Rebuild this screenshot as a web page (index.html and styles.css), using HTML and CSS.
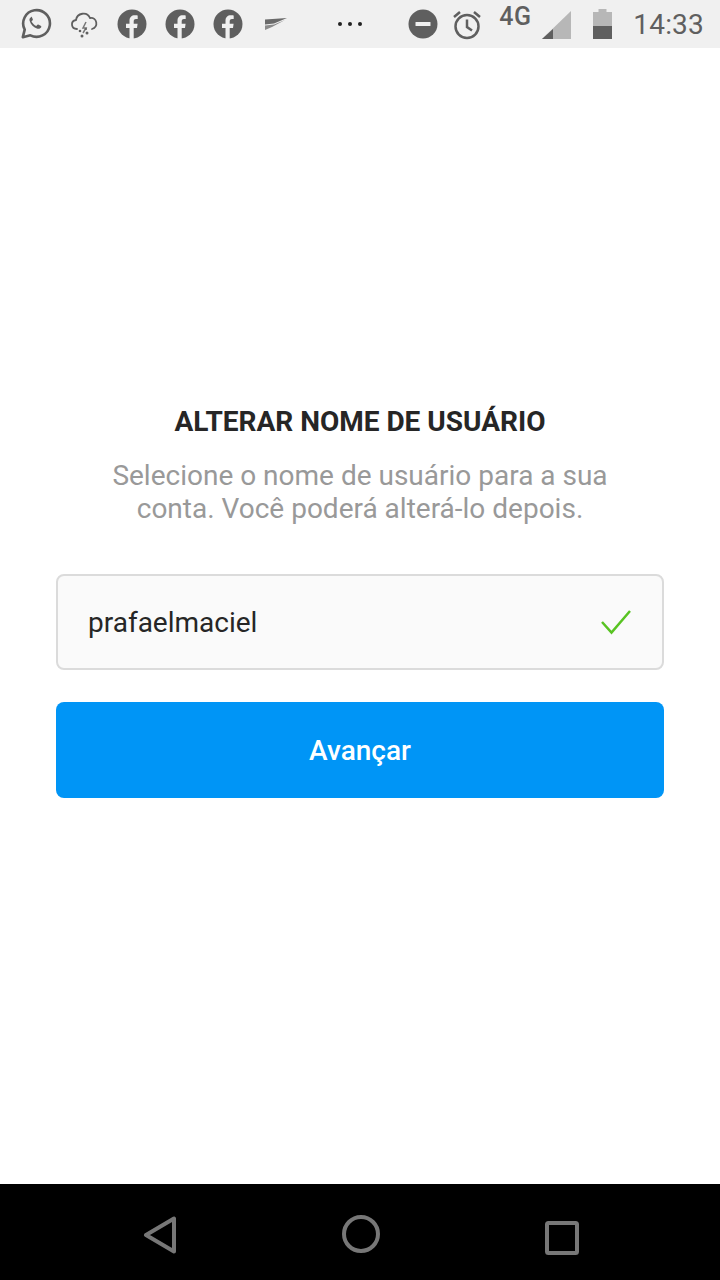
FILE: index.html
```html
<!DOCTYPE html>
<html lang="pt">
<head>
<meta charset="utf-8">
<title>Alterar nome de usuário</title>
<link rel="stylesheet" href="styles.css">
</head>
<body>
<div class="phone">
  <header class="status">
    <div class="status-left">
      <svg class="ic wa" viewBox="0 0 34 34"><path class="wa-o" d="M3 31l2-8A14.2 14.2 0 1 1 11 29z"/><path class="wa-p" d="M12 9.500c-1.500.8-2.300 2.200-1.800 4 1.200 4 4.200 7 8.300 8.500 1.800.5 3.400-.3 4.200-1.800l-.3-1.200-3-1.500-1 .3-1.100 1.400c-2.300-1-4-2.700-5.100-5l1.300-1.100.2-1-1.300-3z"/></svg>
      <svg class="ic cloud" viewBox="0 0 30 30"><path class="cl-o" d="M8 20c-6 0-7-8-1-9 1-7 11-9 14-2 7-1 9 9 2 11"/><path class="cl-r" d="M17 13l-3 6h3l-3 5"/><circle cx="11" cy="22" r="1.300"/><circle cx="13" cy="27" r="1.500"/><circle cx="18" cy="24" r="1.500"/><circle cx="17" cy="20" r="1"/></svg>
      <svg class="ic fb" viewBox="0 0 30 30"><use href="#fb"/></svg>
      <svg class="ic fb" viewBox="0 0 30 30"><use href="#fb"/></svg>
      <svg class="ic fb" viewBox="0 0 30 30"><use href="#fb"/></svg>
      <svg class="ic plane" viewBox="0 0 24 14"><path class="pl-a" d="M1 2.500 23 1 10 6.500 1 7.500z"/><path class="pl-b" d="M1 8.500 10 7.500 21 3 8 10 1 13z"/></svg>
      <svg class="ic dots" viewBox="0 0 26 6"><circle cx="3" cy="3" r="2"/><circle cx="13" cy="3" r="2"/><circle cx="23" cy="3" r="2"/></svg>
    </div>
    <div class="status-right">
      <svg class="ic dnd" viewBox="0 0 30 30"><circle cx="15" cy="15" r="14.500"/><rect x="7.500" y="13" width="15" height="4" rx=".5"/></svg>
      <svg class="ic alarm" viewBox="0 0 30 30"><circle class="al" cx="15" cy="16.500" r="11.500"/><path class="al" d="M15 9.500V17l5 3.500"/><path class="al" d="M2 7l6-5M28 7l-6-5"/></svg>
      <span class="net">4G</span>
      <svg class="ic signal" viewBox="0 0 29 28"><path class="sg-l" d="M29 0v28H0z"/><path class="sg-d" d="M11 18v10H0z"/></svg>
      <svg class="ic batt" viewBox="0 0 19 30"><path class="bt-l" d="M5.500 0h8v3H19v14H0V3h5.500z"/><rect class="bt-d" y="17" width="19" height="13"/></svg>
      <span class="time">14:33</span>
    </div>
  </header>

  <main class="content">
    <h1 class="title">ALTERAR NOME DE USUÁRIO</h1>
    <p class="subtitle">Selecione o nome de usuário para a sua conta. Você poderá alterá-lo depois.</p>
    <div class="field">
      <span class="field-value">prafaelmaciel</span>
      <svg class="check" viewBox="0 0 32 26"><path d="M2 13l9.500 10.500L30 2"/></svg>
    </div>
    <button class="next" type="button">Avançar</button>
  </main>

  <nav class="navbar">
    <svg class="nav-ic back" viewBox="0 0 34 38"><path d="M31 2.500v33L3 19z"/></svg>
    <svg class="nav-ic home" viewBox="0 0 38 38"><circle cx="19" cy="19" r="17"/></svg>
    <svg class="nav-ic recent" viewBox="0 0 34 34"><rect x="2" y="2" width="30" height="30" rx="1.500"/></svg>
  </nav>
</div>
<svg class="defs" width="0" height="0"><defs><g id="fb"><circle cx="15" cy="15" r="14.500" fill="#5f5f5f"/><path fill="#f0f0f0" d="M12.500 30V19H9v-4.200h3.500v-3c0-3.600 2.200-5.500 5.300-5.500 1.500 0 2.900.2 2.900.2v3.600h-1.700c-1.800 0-2.300 1.100-2.300 2.300v2.400h3.900l-.6 4.200h-3.300v11z"/></g></defs></svg>
</body>
</html>
```
FILE: styles.css
```css
* { box-sizing: border-box; }
html, body { margin: 0; padding: 0; background: #fff; }
body { font-family: Roboto, "Liberation Sans", sans-serif; }
.phone { width: 720px; height: 1280px; display: flex; flex-direction: column; overflow: hidden; }
.defs { position: absolute; }

.status { height: 48px; flex: none; background: #f0f0f0; display: flex; justify-content: space-between; align-items: center; padding: 0 16px 0 20px; }
.status-left, .status-right { display: flex; align-items: center; }
.ic { display: block; flex: none; fill: #5f5f5f; }
.wa { width: 32px; height: 32px; margin-right: 17px; }
.wa-o { fill: none; stroke: #5f5f5f; stroke-width: 2.800; stroke-linejoin: round; }
.wa-p { fill: #5f5f5f; }
.cloud { width: 30px; height: 30px; margin-right: 18px; }
.cl-o { fill: none; stroke: #5f5f5f; stroke-width: 1.800; stroke-linecap: round; }
.cl-r { fill: none; stroke: #777; stroke-width: 1.500; }
.fb { width: 30px; height: 30px; margin-right: 18px; }
.plane { width: 24px; height: 14px; margin-left: 3px; margin-right: 49px; }
.pl-a { fill: #6a6a6a; }
.pl-b { fill: #8b8b8b; }
.dots { width: 26px; height: 6px; fill: #222; }
.dnd { width: 30px; height: 30px; margin-right: 14px; }
.dnd rect { fill: #f0f0f0; }
.alarm { width: 30px; height: 30px; margin-right: 17px; margin-top: 1px; }
.al { fill: none; stroke: #5f5f5f; stroke-width: 2.500; }
.net { font-size: 25px; font-weight: 500; color: #5f5f5f; line-height: 1; margin-right: 10px; margin-top: -15px; width: 33px; letter-spacing: .6px; }
.signal { width: 29px; height: 28px; margin-top: 2px; margin-right: 22px; }
.sg-l { fill: #b7b7b7; }
.sg-d { fill: #5f5f5f; }
.batt { width: 19px; height: 30px; margin-right: 21px; }
.bt-l { fill: #b7b7b7; }
.bt-d { fill: #5f5f5f; }
.time { font-size: 28px; color: #5f5f5f; line-height: 1; margin-top: 2px; letter-spacing: .2px; }

.content { flex: 1; padding: 356px 56px 0; display: flex; flex-direction: column; align-items: stretch; }
.title { margin: 0; font-size: 28px; line-height: 36px; font-weight: 700; color: #262626; text-align: center; }
.subtitle { margin: 19px 48px 0; font-size: 28px; line-height: 33px; font-weight: 400; color: #999; text-align: center; }
.field { margin-top: 49px; height: 96px; border: 2px solid #dbdbdb; border-radius: 8px; background: #fafafa; display: flex; align-items: center; justify-content: space-between; padding: 0 30px; }
.field-value { font-size: 28px; color: #262626; }
.check { width: 32px; height: 26px; fill: none; stroke: #58c322; stroke-width: 2.500; }
.next { margin-top: 32px; height: 96px; border: 0; border-radius: 8px; background: #0095f6; color: #fff; font: 500 28px Roboto, "Liberation Sans", sans-serif; padding: 0; }

.navbar { height: 96px; flex: none; background: #000; display: flex; align-items: center; justify-content: space-between; padding: 6px 141px 0 143px; }
.nav-ic { display: block; fill: none; stroke: #777; stroke-width: 4; stroke-linejoin: round; }
.back { width: 34px; height: 38px; }
.home { width: 38px; height: 38px; margin-top: -2px; }
.recent { width: 34px; height: 34px; margin-top: 6px; }
```
